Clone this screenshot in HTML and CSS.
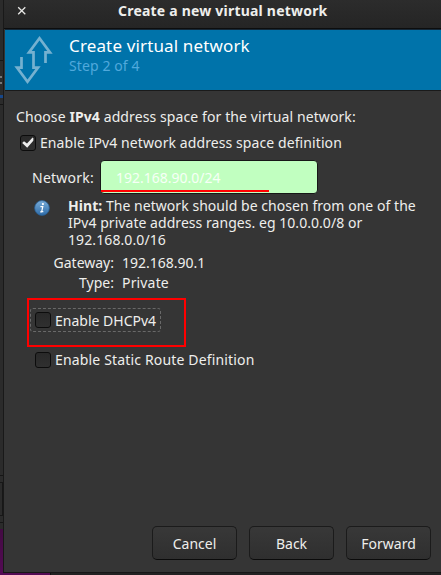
FILE: index.html
```
<!DOCTYPE html>
<html lang="en">
<head>
<meta charset="utf-8">
<title>Create a new virtual network</title>
<link rel="stylesheet" href="styles.css">
</head>
<body>
<div class="desktop">
  <div class="behind">
    <i class="rule r1"></i><i class="mark m1"></i><i class="mark m2"></i><i class="blue"></i>
    <i class="rule r2"></i><i class="rule r3"></i><i class="stub"></i><i class="rule r4"></i>
    <i class="purple"></i>
  </div>
  <main class="window">
    <header class="titlebar">
      <svg class="close" width="10" height="10" viewBox="0 0 10 10"><path d="M1.2 1.2 8.3 8.3M8.3 1.2 1.2 8.3" stroke="#e8e8e6" stroke-width="1.3"/></svg>
      <h1 class="t-title">Create a new virtual network</h1>
    </header>
    <section class="banner">
      <svg class="arrows" width="42" height="52" viewBox="0 0 42 52" fill="none" stroke="#75b1d0" stroke-width="2.7">
        <path d="M31.5 30V19.4H36L25.5 5.2 15 19.4H19.5V34.6H24L13.5 48.8 3 34.6H7.5V24"/>
      </svg>
      <div class="heading">
        <h2 class="t-head">Create virtual network</h2>
        <p class="t-step">Step 2 of 4</p>
      </div>
    </section>
    <section class="content">
      <p class="intro"><span class="t-intro">Choose <b>IPv4</b> address space for the virtual network:</span></p>
      <label class="check first"><span class="box"><svg width="14" height="14" viewBox="0 0 14 14"><path d="M1.2 7 3 5.2 6 7.5 11.6 1.6 12.4 2.3 12.3 4.8 6.2 11.7Z" fill="#eee"/></svg></span><span class="t-enable">Enable IPv4 network address space definition</span></label>
      <div class="network"><span class="t-net">Network:</span><div class="entry"><span class="t-value">192.168.90.0/24</span><i class="underline"></i></div></div>
      <div class="hint">
        <svg width="16" height="16" viewBox="0 0 16 16"><defs><linearGradient id="info" x1="0" y1="0" x2="0" y2="1"><stop offset="0" stop-color="#79acd8"/><stop offset="1" stop-color="#2e6ca8"/></linearGradient></defs><circle cx="8" cy="8" r="7.4" fill="url(#info)" stroke="#285d91" stroke-width=".8"/><circle cx="8.9" cy="4.1" r="1.1" fill="#fff"/><path d="M6.4 6.7H8.8L7.7 11.7H9.3M6.2 11.9H8" stroke="#fff" stroke-width="1.2" fill="none"/></svg>
        <p><span class="t-h1"><b>Hint:</b> The network should be chosen from one of the</span><span class="t-h2">IPv4 private address ranges. eg 10.0.0.0/8 or</span><span class="t-h3">192.168.0.0/16</span></p>
      </div>
      <dl class="facts">
        <dt>Gateway:</dt><dd>192.168.90.1</dd>
        <dt>Type:</dt><dd class="t-priv">Private</dd>
      </dl>
      <div class="highlight"><label class="check focus"><span class="box"></span><span>Enable DHCPv4</span></label></div>
      <label class="check static"><span class="box"></span><span class="t-static">Enable Static Route Definition</span></label>
    </section>
    <footer class="actions">
      <button>Cancel</button><button>Back</button><button>Forward</button>
    </footer>
  </main>
</div>
</body>
</html>
```
FILE: styles.css
```
* { box-sizing: border-box; }
body { margin: 0; font: 14px/17px "Noto Sans", sans-serif; color: #eeeeec; overflow: hidden; }
h1, h2, p, dl, dd { margin: 0; }
span { white-space: nowrap; }
.desktop { position: relative; width: 441px; height: 575px; padding-left: 3px; background: #222; }
.behind { position: absolute; left: 0; top: 0; width: 51px; height: 575px; background: #2b2b2b; border-right: 1px solid #111; }
.behind i { position: absolute; left: 0; width: 3px; }
.behind .rule { height: 1px; background: #161616; }
.r1 { top: 60px; } .r2 { top: 104px; } .r3 { top: 475px; } .r4 { top: 522px; }
.behind .mark { width: 2px; height: 2px; background: #777; }
.m1 { top: 76px; } .m2 { top: 82px; }
.blue { top: 95px; height: 3px; background: #17478a; }
.stub { top: 482px; height: 34px; border: solid #171717; border-width: 1px 1px 1px 0; }
.behind .purple { top: 529px; width: 50px; height: 46px; background: linear-gradient(#430b43, #540b55); }
.window { position: relative; display: flex; flex-direction: column; width: 438px; height: 573px; background: #353535; border-left: 1px solid #191919; border-bottom: 1px solid #171717; }
.titlebar { display: flex; align-items: center; height: 29px; padding: 0 0 7px 13px; background: linear-gradient(#2c2c2c, #252525); border-bottom: 1px solid #0d0d0d; }
.close { margin-right: 91px; }
.titlebar h1 { font-size: 14px; line-height: 20px; font-weight: 700; letter-spacing: .21px; }
.banner { display: flex; height: 62px; margin-left: 1px; padding: 3px 0 0 9px; background: #0073aa; border-top: 1px solid #142838; border-bottom: 1px solid #1a1a1a; }
.arrows { flex: none; }
.heading { margin: 2px 0 0 13px; }
.heading h2 { font-size: 17px; line-height: 22px; font-weight: 400; color: #fff; letter-spacing: .14px; }
.heading p { font-size: 14px; line-height: 18px; color: #50a9dc; letter-spacing: .1px; }
.content { flex: 1; padding: 17px 0 0 12px; }
.intro { height: 19px; }
.t-intro { letter-spacing: .1px; }
.t-enable { letter-spacing: .09px; }
.t-net { letter-spacing: .25px; }
.t-h1, .t-h2 { letter-spacing: .045px; }
.t-h3 { letter-spacing: .1px; }
.t-priv, .t-static { letter-spacing: .16px; }
.check { display: flex; align-items: center; gap: 4px; }
.box { display: grid; place-items: center; width: 16px; height: 16px; background: linear-gradient(#292929, #303030); border: 1px solid #0c0c0c; border-radius: 3px; }
.first { height: 17px; margin: 7px 0 0 4px; }
.network { display: flex; align-items: center; height: 34px; margin: 9px 0 0 16px; }
.network > span { width: 68px; }
.entry { position: relative; display: flex; align-items: center; width: 218px; height: 34px; padding-left: 15px; background: #c1ffc0; border: 1px solid #171717; border-radius: 4px; color: #f7fff7; }
.underline { position: absolute; left: 0; bottom: 1px; width: 168px; height: 2px; background: #f00; }
.hint { display: flex; height: 51px; margin: 3px 0 0 18px; }
.hint svg { flex: none; margin: 3px 18px 0 0; }
.hint p span { display: block; }
.facts { display: grid; grid-template-columns: 98px 1fr; column-gap: 8px; grid-auto-rows: 20px; padding-top: 6px; }
.facts dt { text-align: right; }
.highlight { width: 159px; height: 49px; margin: 4px 0 0 11px; padding: 8px 0 0 1px; border: 2px solid #f00; }
.focus { width: 131px; height: 24px; padding-left: 4px; border: 1px dashed #696969; border-radius: 3px; }
.static { height: 17px; margin: 4px 0 0 19px; }
.actions { display: flex; gap: 12px; height: 46px; padding-left: 148px; }
.actions button { width: 85px; height: 34px; padding: 0; font: inherit; color: inherit; background: linear-gradient(#383838, #2f2f2f); border: 1px solid #1b1b1b; border-bottom-color: #0b0b0b; border-radius: 5px; }
```
